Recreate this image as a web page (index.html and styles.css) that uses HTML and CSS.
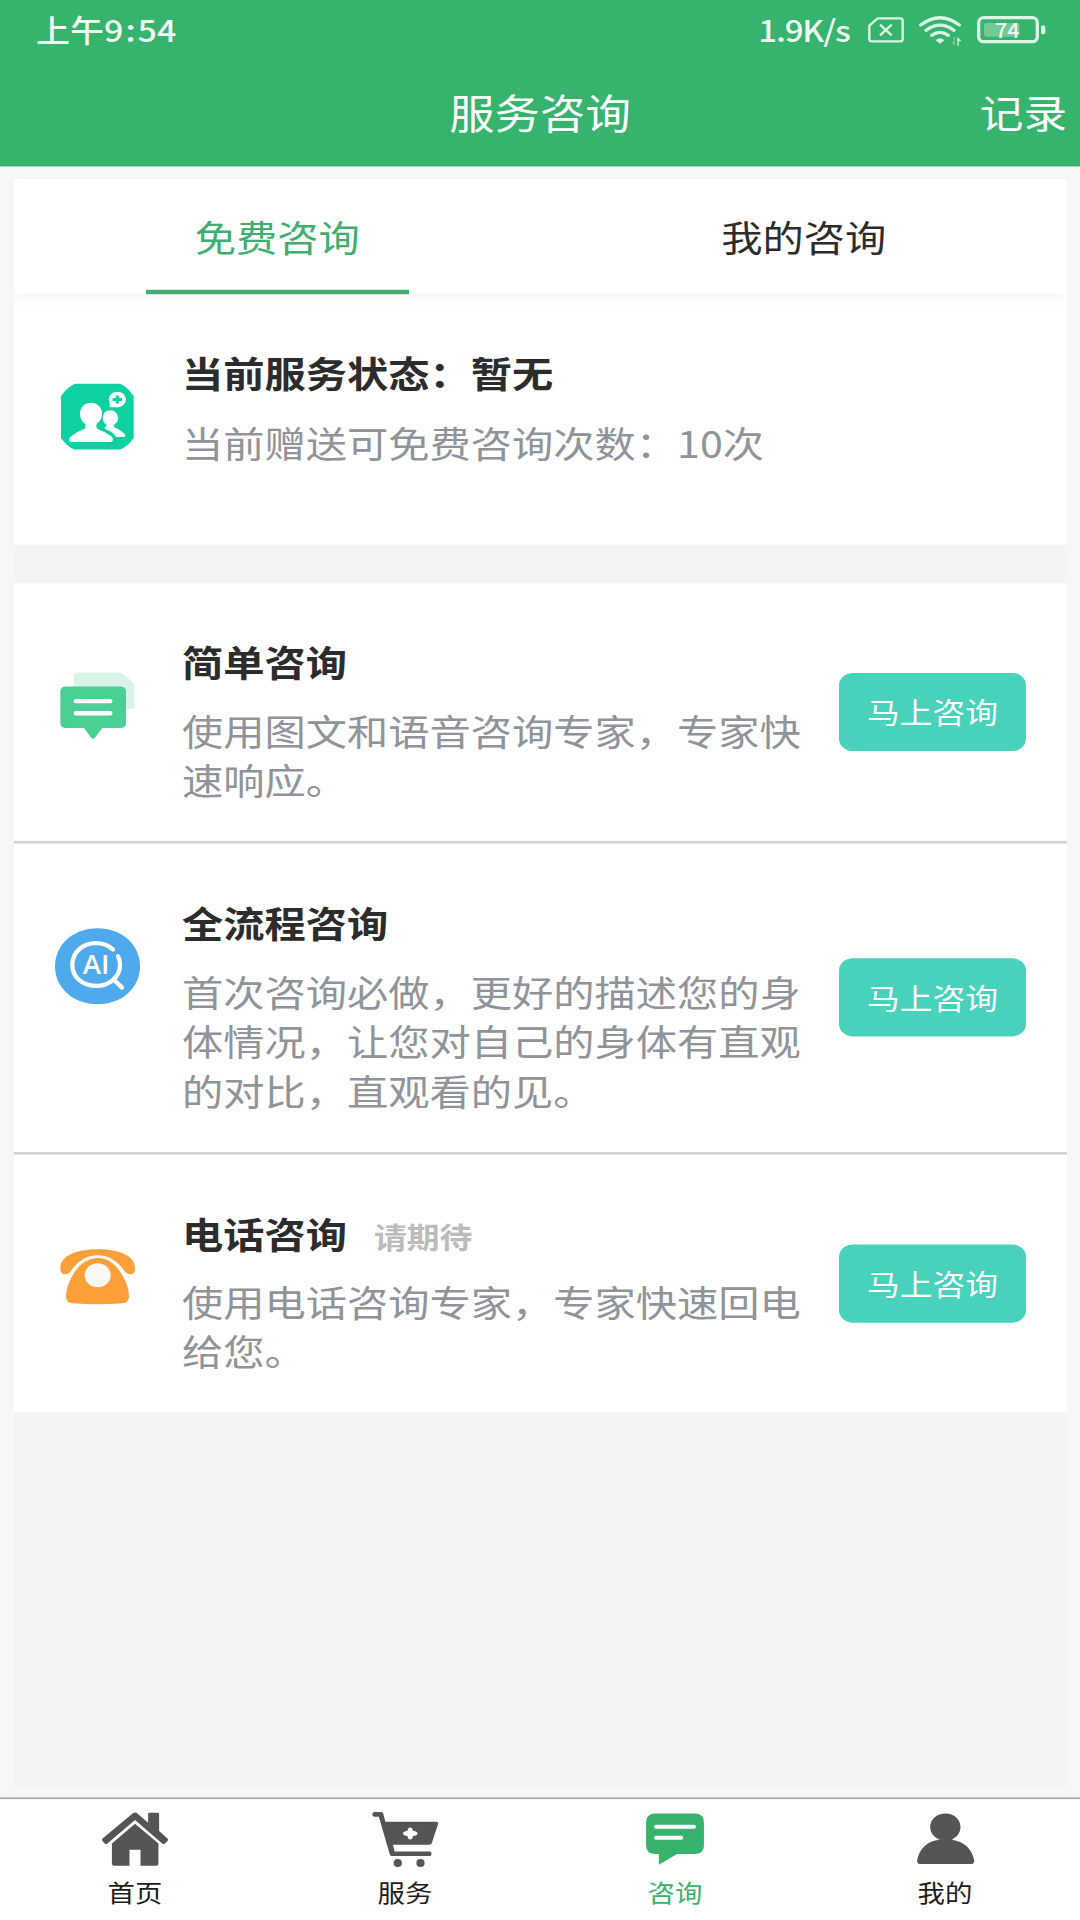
FILE: index.html
```html
<!DOCTYPE html>
<html lang="zh-CN">
<head>
<meta charset="utf-8">
<title>服务咨询</title>
<link rel="stylesheet" href="styles.css">
</head>
<body>
<div class="display">
<div class="screen">
  <header class="header">
    <div class="status">
      <div class="clock">上午9<span class="colon">:</span>54</div>
      <div class="speed">1.9K/s</div>
      <svg class="sim" viewBox="384 40 108 100" preserveAspectRatio="none" fill="none" stroke="#dcf5e6" stroke-width="7">
        <path d="M413 55H481Q488 55 488 62V117Q488 124 481 124H395Q388 124 388 117V77Z" stroke-linejoin="round"/>
        <path d="M420 74L455 106M455 74L420 106"/>
      </svg>
      <svg class="wifi" viewBox="537 40 126 100" preserveAspectRatio="none" fill="none" stroke="#dcf5e6" stroke-width="10" stroke-linecap="round">
        <path d="M542 75Q600 31 658 75"/>
        <path d="M558 91Q600 60 642 91"/>
        <path d="M575 106Q600 88 625 106"/>
        <path d="M587 121Q600 108 613 121L600 131Z" fill="#dcf5e6" stroke="none"/>
        <path d="M652 110V138H656V124H664Z" fill="#dcf5e6" stroke="none"/>
        <path d="M645 110V137L632 125H641V110Z" fill="#74cb98" stroke="none"/>
      </svg>
      <svg class="battery" viewBox="711 40 205 100" preserveAspectRatio="none">
        <rect x="716" y="53" width="176" height="72" rx="15" fill="none" stroke="#dcf5e6" stroke-width="10"/>
        <rect x="732" y="69" width="106" height="41" rx="8" fill="#73ca97"/>
        <rect x="903" y="76" width="13" height="27" rx="6" fill="#dcf5e6"/>
        <text class="charge" x="765" y="113" textLength="74" lengthAdjust="spacingAndGlyphs">74</text>
      </svg>
    </div>
    <div class="titlebar">
      <h1 class="title">服务咨询</h1>
      <a class="records">记录</a>
    </div>
  </header>

  <main class="main">
    <div class="content">
      <nav class="tabs">
        <a class="tab tab-active">免费咨询</a>
        <a class="tab">我的咨询</a>
      </nav>

      <section class="item item-state">
        <svg class="icon" viewBox="45 26.5 258 229" preserveAspectRatio="none">
          <path d="M104 42H241Q262 52 281 79V204Q264 228 241 239H103Q80 228 63 204V79Q80 54 104 42Z" fill="#0dd1a1"/>
          <g fill="#fff">
            <path d="M153 99C135 99 120 113 120 131C120 146 126 154 135 162Q138 174 133 177Q110 185 93 199Q87 204 87 210Q87 216 94 216H212Q219 216 219 209Q219 202 213 198Q195 185 173 177Q167 173 170 162C180 154 186 146 186 131C186 113 171 99 153 99Z"/>
            <path d="M211 121C197 121 188 131 188 144C188 154 193 160 199 164Q201 170 194 172Q193 177 198 179L211 184Q222 190 228 201H251Q257 201 256 195Q244 181 223 172Q220 169 223 163C230 159 234 153 234 144C234 131 224 121 211 121Z"/>
            <ellipse cx="232" cy="89" rx="26" ry="23"/>
            <path d="M209 94V112H234V94Z"/>
          </g>
          <path d="M232 77V101M218 89H246" stroke="#0dd1a1" stroke-width="9"/>
        </svg>
        <div class="info">
          <h2 class="name">当前服务状态：暂无</h2>
          <p class="desc">当前赠送可免费咨询次数：10次</p>
        </div>
      </section>

      <div class="list">
        <section class="item">
          <svg class="icon" viewBox="45 143 258 229" preserveAspectRatio="none">
            <path d="M113 158H237Q253 161 284 195V255Q284 267 272 267H102V169Q102 158 113 158Z" fill="#d9f4e7"/>
            <path d="M76 200H243Q258 202 258 215V309Q258 322 243 324H187L164 354Q159 359 154 354L132 324H76Q61 322 61 309V215Q61 202 76 200Z" fill="#4bcf92"/>
            <path d="M107 243.500H211M107 280H211" stroke="#fff" stroke-width="13" stroke-linecap="round"/>
          </svg>
          <div class="info">
            <h2 class="name">简单咨询</h2>
            <p class="desc">使用图文和语音咨询专家，专家快速响应。</p>
          </div>
          <button class="ask">马上咨询</button>
        </section>

        <section class="item">
          <svg class="icon" viewBox="45 86.5 258 229" preserveAspectRatio="none">
            <path d="M172.500 87C246 87 300 137 300 201C300 265 246 315 172.500 315C99 315 45 265 45 201C45 137 99 87 172.500 87Z" fill="#4ea9ed"/>
            <g fill="none" stroke="#fff" stroke-width="13" stroke-linecap="round">
              <path d="M219 151C204 137 187 132 168 132C127 132 97 160 97 197C97 233 127 260 168 260C209 260 240 232 240 197Q240 182 234 171"/>
              <path d="M222 242L246 265"/>
            </g>
            <text class="ai" x="128" y="224" textLength="80" lengthAdjust="spacingAndGlyphs">AI</text>
          </svg>
          <div class="info">
            <h2 class="name">全流程咨询</h2>
            <p class="desc">首次咨询必做，更好的描述您的身体情况，让您对自己的身体有直观的对比，直观看的见。</p>
          </div>
          <button class="ask">马上咨询</button>
        </section>

        <section class="item">
          <svg class="icon" viewBox="45 119.5 258 229" preserveAspectRatio="none">
            <path d="M173 150C106 150 61 170 61 207C61 222 68 225 79 225Q87 224 93 215C116 182 143 168 173 168C203 168 230 182 253 215Q259 224 269 225C280 225 285 222 285 207C285 170 240 150 173 150Z" fill="#ff9f39"/>
            <path d="M173 176C141 176 116 196 97 229Q78 262 78 292Q79 309 96 312Q173 317 249 312Q266 309 267 292Q267 262 248 229C229 196 204 176 173 176Z" fill="#ff9f39"/>
            <ellipse cx="173" cy="228" rx="39" ry="36" fill="#f8f8f7"/>
          </svg>
          <div class="info">
            <h2 class="name">电话咨询<span class="soon">请期待</span></h2>
            <p class="desc">使用电话咨询专家，专家快速回电给您。</p>
          </div>
          <button class="ask">马上咨询</button>
        </section>
      </div>
    </div>
  </main>

  <nav class="navbar">
    <a class="nav">
      <svg class="nav-icon" viewBox="287.5 90 209 180" preserveAspectRatio="none" fill="#555">
        <path d="M385 101Q392 96 399 101L430 129V103Q430 99 434 99H458Q462 99 462 103V154L487 177Q489 180 487 183L479 191Q475 194 471 191L392 121L312 191Q308 194 304 191L297 183Q295 180 297 177Z"/>
        <path d="M392 132L460 191V252Q460 258 454 258H408V210H376V258H332Q325 258 325 252V191Z"/>
      </svg>
      <span>首页</span>
    </a>
    <a class="nav">
      <svg class="nav-icon" viewBox="1071.5 90 209 180" preserveAspectRatio="none" fill="#555">
        <path fill-rule="evenodd" d="M1087 97H1107Q1111 97 1113 102L1119 126H1268Q1273 127 1272 133L1254 190Q1252 195 1246 195H1141L1146 215H1249Q1253 216 1253 222Q1253 229 1248 229H1138Q1134 229 1132 224L1100 111H1087Q1081 110 1081 104Q1081 98 1087 97ZM1185 146Q1191 140 1197 146L1199 153L1208 155Q1217 161 1208 167L1199 169L1197 176Q1191 182 1185 176L1183 169L1175 167Q1165 161 1175 155L1183 153Z"/>
        <ellipse cx="1155" cy="250" rx="12" ry="12"/>
        <ellipse cx="1221" cy="250" rx="12" ry="12"/>
      </svg>
      <span>服务</span>
    </a>
    <a class="nav nav-active">
      <svg class="nav-icon" viewBox="287.5 90 209 180" preserveAspectRatio="none">
        <path d="M332 101H452Q476 103 476 126V199Q475 221 452 223H398L345 255V223H332Q309 221 308 199V126Q309 103 332 101Z" fill="#37b36e"/>
        <path d="M337 141H447M337 174H410" stroke="#fff" stroke-width="12" stroke-linecap="round"/>
      </svg>
      <span>咨询</span>
    </a>
    <a class="nav">
      <svg class="nav-icon" viewBox="1071.5 90 209 180" preserveAspectRatio="none" fill="#555">
        <path d="M1177 101C1203 101 1221 119 1221 142C1221 159 1211 172 1196 180C1231 185 1254 207 1261 242Q1261 252 1253 253H1103Q1095 252 1095 244C1100 208 1125 183 1160 180C1143 172 1133 159 1133 142C1133 119 1152 101 1177 101Z"/>
      </svg>
      <span>我的</span>
    </a>
  </nav>
</div>
</div>
</body>
</html>
```
FILE: styles.css
```css
* {
  box-sizing: border-box;
}

body {
  margin: 0;
}

.display {
  width: 1080px;
  height: 1920px;
  overflow: hidden;
}

/* The interface is laid out at 1080x2160 and fitted to a 1080x1920 display. */
.screen {
  display: flex;
  flex-direction: column;
  width: 1080px;
  height: 2160px;
  transform: scaleY(0.88889);
  transform-origin: 0 0;
  background: #f7f7f7;
  color: #2c2c2c;
  font-family: "Noto Sans CJK SC", sans-serif;
  text-spacing-trim: space-all;
}

.header {
  display: flex;
  flex-direction: column;
  height: 187px;
  background: #36b36d;
  border-bottom: 1px solid #42a56e;
  color: #fff;
}

.status {
  display: flex;
  align-items: center;
  height: 68px;
  padding: 0 35px 0 36px;
  color: #effaf3;
  font-size: 34px;
  font-weight: 500;
  line-height: 40px;
}

.clock,
.speed {
  padding-bottom: 3px;
}

.colon {
  padding: 0 2px;
}

.speed {
  margin-left: auto;
  font-size: 33px;
  letter-spacing: -1.1px;
}

.sim,
.wifi,
.battery {
  flex: none;
  height: 37.5px;
  overflow: visible;
}

.sim {
  width: 36px;
  margin-left: 18px;
}

.wifi {
  width: 42px;
  margin-left: 15px;
}

.battery {
  width: 68.3px;
  margin-left: 16px;
}

.charge {
  fill: #effaf3;
  font-size: 58px;
  font-weight: 500;
}

.titlebar {
  display: grid;
  grid-template-columns: 1fr auto 1fr;
  align-items: center;
  height: 114px;
  padding-right: 13px;
}

.title {
  grid-column: 2;
  margin: 0 0 0 13px;
  font-size: 45.4px;
  font-weight: 400;
  line-height: 60px;
}

.records {
  justify-self: end;
  font-size: 43.6px;
  line-height: 60px;
}

.main {
  flex: 1;
  padding: 14px 13px 11px 14px;
}

.content {
  height: 100%;
  background: #f4f4f4;
}

.tabs {
  position: relative;
  display: flex;
  height: 130px;
  background: #fff;
  box-shadow: 0 3px 14px rgba(0, 0, 0, 0.05);
  clip-path: inset(0 0 -20px 0);
}

.tab {
  display: flex;
  flex: 1;
  flex-direction: column;
  align-items: center;
  justify-content: space-between;
  padding-top: 34px;
  font-size: 41.25px;
  line-height: 60px;
}

.tab-active {
  color: #3fae6f;
}

.tab-active::after {
  content: "";
  width: 50%;
  height: 5px;
  background: #3fae6f;
}

.item {
  display: flex;
  align-items: center;
  padding: 61px 41px 41.5px;
  background: #fff;
}

.item-state {
  height: 282px;
  align-items: flex-start;
}

.list {
  margin-top: 42.5px;
}

.list .item + .item {
  border-top: 3px solid #d3d3d3;
}

.icon {
  flex: none;
  align-self: flex-start;
  width: 86px;
  height: 86px;
  margin-top: 34px;
}

.ai {
  fill: #fff;
  font-family: "Open Sans", sans-serif;
  font-size: 80px;
  font-weight: 600;
}

.info {
  flex: 1;
  margin: 0 19px 0 41px;
}

.name {
  display: flex;
  align-items: center;
  margin: 0 0 22px;
  font-size: 41.25px;
  font-weight: 700;
  line-height: 55.5px;
}

.soon {
  margin: 7px 0 0 27px;
  color: #bbb;
  font-size: 32.8px;
  line-height: 48px;
}

.desc {
  margin: 0;
  color: #909399;
  font-size: 41.25px;
  line-height: 55.4px;
}

.ask {
  flex: none;
  width: 187px;
  height: 88px;
  margin-top: -20px;
  padding: 0;
  border: 0;
  border-radius: 14px;
  background: #48d1bb;
  color: #fff;
  font: 400 32.8px/88px "Noto Sans CJK SC", sans-serif;
}

.navbar {
  display: flex;
  height: 138px;
  border-top: 2px solid #a9a9a9;
  background: #fff;
  color: #1c1c1c;
  font-size: 27.4px;
  line-height: 40px;
}

.nav {
  display: flex;
  flex: 1;
  flex-direction: column;
  align-items: center;
  gap: 4px;
  padding-top: 12px;
}

.nav-active {
  color: #37b36e;
}

.nav-icon {
  width: 72px;
  height: 67.5px;
}
```
